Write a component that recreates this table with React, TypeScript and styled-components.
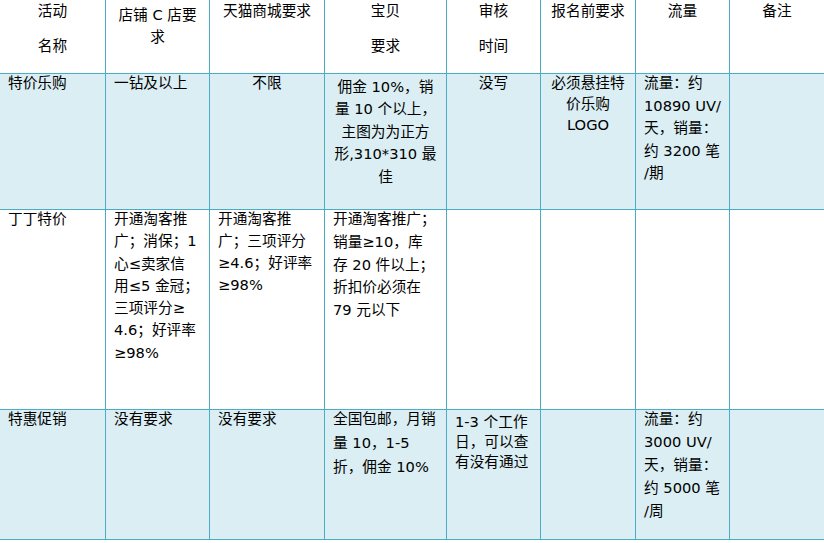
import React from 'react';
import styled, { createGlobalStyle } from 'styled-components';

const GlobalStyle = createGlobalStyle`
  html, body {
    margin: 0;
    padding: 0;
    background: #fff;
    overflow: hidden;
  }
  body {
    font-family: 'DejaVu Sans', 'Noto Sans CJK SC', sans-serif;
    font-size: 14.67px;
    color: #000;
  }
`;

const borderColor = '#4bacc6';
const shadeColor = '#daeef3';

const Grid = styled.div`
  display: grid;
  grid-template-columns: 105px 103px 114px 121px 93px 94px 93px 94px;
  grid-template-rows: 73px 135px 199px 129px;
  gap: 1px;
  width: max-content;
  padding: 0 1px 1px 0;
  background: ${borderColor};
`;

const Cell = styled.div<{ $shaded: boolean; $align: 'left' | 'center' }>`
  background: ${(p) => (p.$shaded ? shadeColor : '#fff')};
  text-align: ${(p) => p.$align};
  padding: 0 8px;
  overflow: hidden;
`;

const Content = styled.div<{ $pt: number }>`
  padding-top: ${(p) => p.$pt}px;
  line-height: 18px;
`;

const Line = styled.div<{ $step: number }>`
  height: ${(p) => p.$step}px;
  white-space: nowrap;
`;

type CellData = {
  lines: string[];
  align?: 'left' | 'center';
  pt?: number;
  step?: number;
};

type RowData = {
  shaded: boolean;
  cells: CellData[];
};

const rows: RowData[] = [
  {
    shaded: false,
    cells: [
      { lines: ['活动', '名称'], align: 'center', pt: 2, step: 35 },
      { lines: ['店铺 C 店要', '求'], align: 'center', pt: 6, step: 21.5 },
      { lines: ['天猫商城要求'], align: 'center', pt: 2 },
      { lines: ['宝贝', '要求'], align: 'center', pt: 2, step: 35 },
      { lines: ['审核', '时间'], align: 'center', pt: 2, step: 35 },
      { lines: ['报名前要求'], align: 'center', pt: 2 },
      { lines: ['流量'], align: 'center', pt: 2 },
      { lines: ['备注'], align: 'center', pt: 2 },
    ],
  },
  {
    shaded: true,
    cells: [
      { lines: ['特价乐购'] },
      { lines: ['一钻及以上'] },
      { lines: ['不限'], align: 'center' },
      {
        lines: ['佣金 10%，销', '量 10 个以上，', '主图为为正方', '形,310*310 最', '佳'],
        align: 'center',
        pt: 3.5,
        step: 22.6,
      },
      { lines: ['没写'], align: 'center' },
      { lines: ['必须悬挂特', '价乐购', 'LOGO'], align: 'center', step: 21 },
      { lines: ['流量：约', '10890 UV/', '天，销量：', '约 3200 笔', '/期'], step: 22.6 },
      { lines: [] },
    ],
  },
  {
    shaded: false,
    cells: [
      { lines: ['丁丁特价'] },
      {
        lines: ['开通淘客推', '广；消保；1', '心≤卖家信', '用≤5 金冠；', '三项评分≥', '4.6；好评率', '≥98%'],
        step: 22.3,
      },
      { lines: ['开通淘客推', '广；三项评分', '≥4.6；好评率', '≥98%'], step: 22 },
      {
        lines: ['开通淘客推广；', '销量≥10，库', '存 20 件以上；', '折扣价必须在', '79 元以下'],
        step: 22.8,
      },
      { lines: [] },
      { lines: [] },
      { lines: [] },
      { lines: [] },
    ],
  },
  {
    shaded: true,
    cells: [
      { lines: ['特惠促销'] },
      { lines: ['没有要求'] },
      { lines: ['没有要求'] },
      { lines: ['全国包邮，月销', '量 10，1-5', '折，佣金 10%'], step: 24 },
      { lines: ['1-3 个工作', '日，可以查', '有没有通过'], pt: 3, step: 20 },
      { lines: [] },
      { lines: ['流量：约', '3000 UV/', '天，销量：', '约 5000 笔', '/周'], step: 22.9 },
      { lines: [] },
    ],
  },
];

const App = () => {
  return (
    <>
      <GlobalStyle />
      <Grid>
        {rows.map((row, r) =>
          row.cells.map((cell, c) => (
            <Cell key={`${r}-${c}`} $shaded={row.shaded} $align={cell.align ?? 'left'}>
              <Content $pt={cell.pt ?? 0}>
                {cell.lines.map((line, i) => (
                  <Line key={i} $step={cell.step ?? 22}>
                    {line}
                  </Line>
                ))}
              </Content>
            </Cell>
          )),
        )}
      </Grid>
    </>
  );
};

export default App;
